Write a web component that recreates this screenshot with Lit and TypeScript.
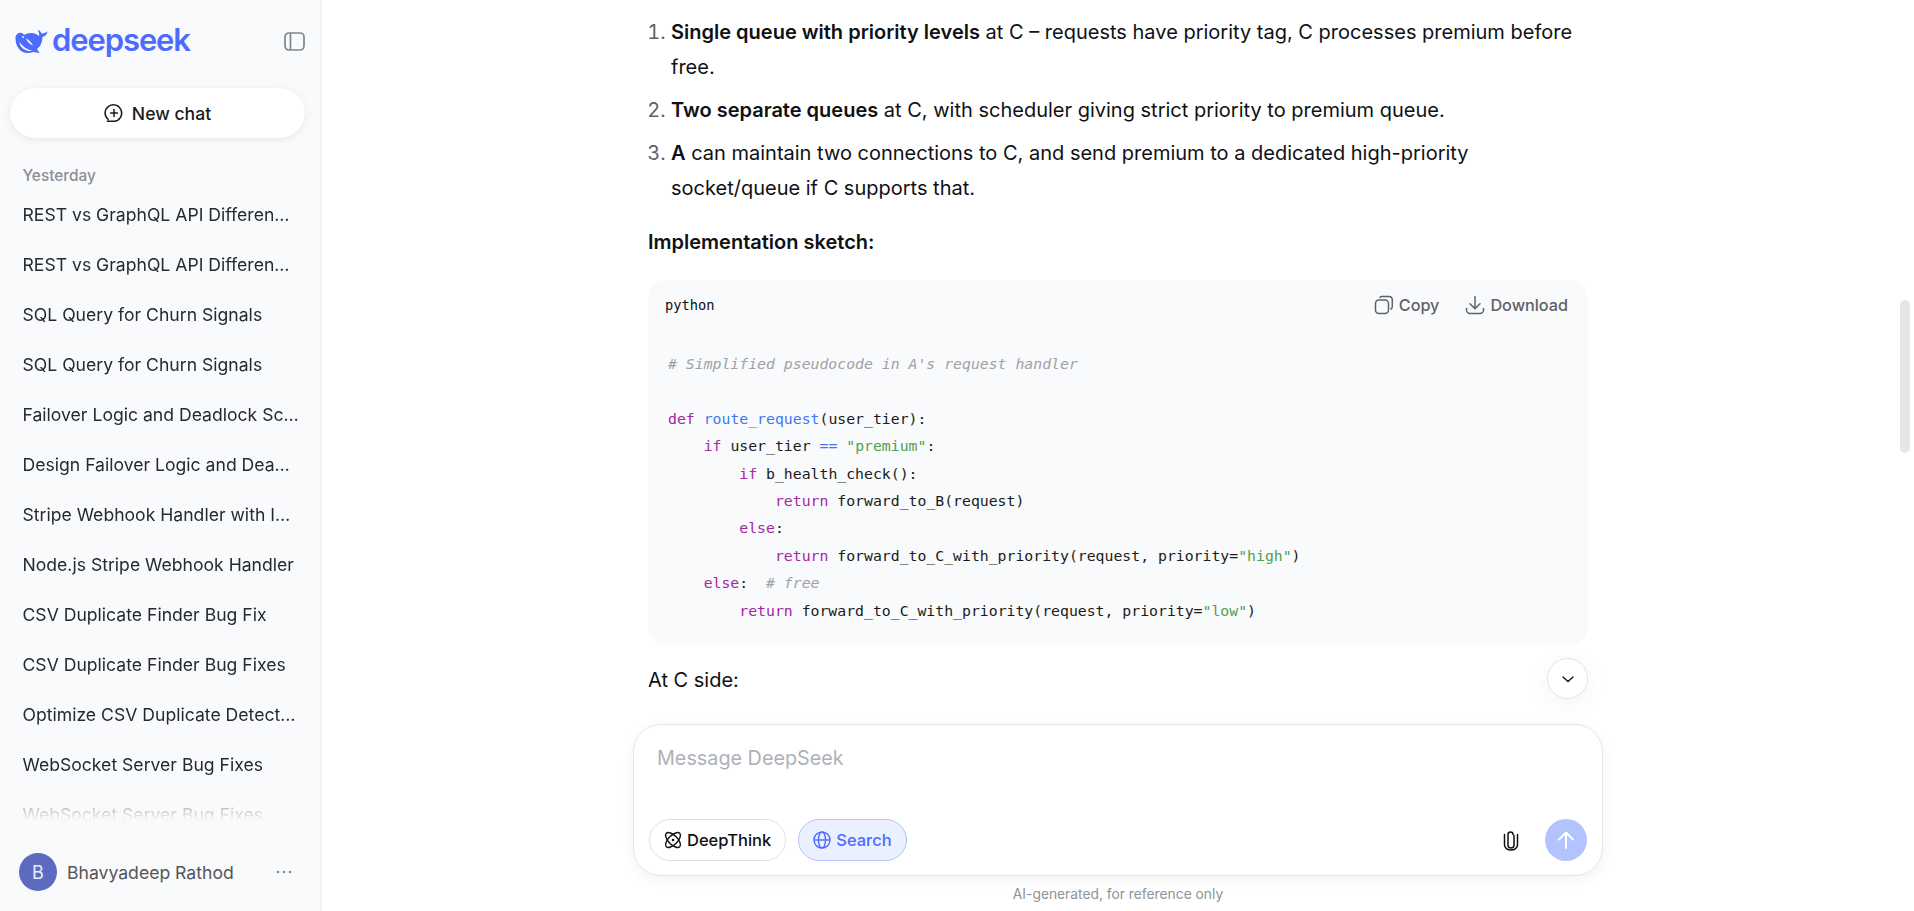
import { LitElement, html, css, svg } from "lit";
import { customElement } from "lit/decorators.js";

const chats = [
  "REST vs GraphQL API Differen…",
  "REST vs GraphQL API Differen…",
  "SQL Query for Churn Signals",
  "SQL Query for Churn Signals",
  "Failover Logic and Deadlock Sc…",
  "Design Failover Logic and Dea…",
  "Stripe Webhook Handler with I…",
  "Node.js Stripe Webhook Handler",
  "CSV Duplicate Finder Bug Fix",
  "CSV Duplicate Finder Bug Fixes",
  "Optimize CSV Duplicate Detect…",
  "WebSocket Server Bug Fixes",
  "WebSocket Server Bug Fixes",
];

const whale = svg`<path d="M.5 9C.5 5 4 3 7 4c1 .5 1.500 1 2 2 3-2 8-3 12-1 1 .5 2 1.500 3 2 .5-2 0-4-1.500-6 2 0 3.500 2 4 3.500 1.500 0 3.500-.5 6-2-.5 3-2.500 5-5 5.500 0 5-2.500 10-5.500 12l2.500 4-6.500-1c-5 2-11 1-14-3C1.500 17 .5 13 .5 9z" fill="currentColor"/><path d="M4.500 13c3 4 7 7.500 13 9-5.500.6-10.500-2-12.500-6zM11 9.500c3 1.500 5.500 4 7 7-3.500-1.500-6-4-7-7z" fill="#f9fafb"/><circle cx="8" cy="8" r="0.900" fill="#f9fafb"/>`;

@customElement("app-root")
export class AppRoot extends LitElement {
  static styles = css`
    :host { display: flex; height: 100vh; overflow: hidden; font-family: Inter, "Liberation Sans", sans-serif; color: #0f1115; background: #fff; position: relative; }
    * { box-sizing: border-box; }
    svg { display: block; flex: none; }

    .side { width: 322px; flex: none; background: #f9fafb; border-right: 2px solid #f1f2f4; display: flex; flex-direction: column; padding: 0 15px 0 10px; }
    .brand { display: flex; align-items: center; justify-content: space-between; height: 40px; margin-top: 21px; padding-left: 5px; }
    .logo { display: flex; align-items: center; gap: 4px; color: #4d6bfe; }
    .logo span { font-family: Inter, sans-serif; font-weight: 600; font-size: 31px; letter-spacing: -1.100px; line-height: 1; position: relative; top: -2px; }
    .toggle { color: #81858c; }
    .new { margin-top: 27px; height: 50px; border-radius: 25px; background: #fff; box-shadow: 0 2px 8px rgba(0,0,0,.07), 0 0 1px rgba(0,0,0,.08); display: flex; align-items: center; justify-content: center; gap: 8px; font-size: 17.600px; font-weight: 500; color: #1a1c20; }
    .group { margin-top: 27px; padding-left: 12.500px; height: 22px; line-height: 22px; font-size: 15.400px; font-weight: 500; color: #8b8e96; }
    .list { flex: 1; min-height: 0; overflow: hidden; margin-top: 3px; -webkit-mask-image: linear-gradient(to bottom, #000 calc(100% - 60px), transparent calc(100% - 12px)); mask-image: linear-gradient(to bottom, #000 calc(100% - 60px), transparent calc(100% - 12px)); }
    .item { height: 50px; line-height: 50px; padding: 0 0 0 12.500px; font-size: 17.600px; color: #262a30; white-space: nowrap; }
    .user { height: 78px; display: flex; align-items: center; padding: 0 0 0 9px; flex: none; }
    .avatar { width: 38px; height: 38px; border-radius: 50%; background: #5c6bc0; color: #e8eaf6; display: flex; align-items: center; justify-content: center; font-size: 18px; margin-right: 10px; }
    .name { flex: 1; font-size: 17.600px; color: #555; }
    .dots { margin-right: 13px; color: #81858c; }

    .main { flex: 1; min-width: 0; display: flex; flex-direction: column; align-items: center; position: relative; }
    .chat { flex: 1; min-height: 0; width: 940px; overflow: hidden; font-size: 20px; line-height: 35px; }
    ol { margin: 0; padding: 15px 0 0 23px; }
    li { margin-bottom: 8px; }
    li::marker { color: #5e6168; }
    b { font-weight: 600; }
    p { margin: 0; }
    .h { margin-top: 19px; font-weight: 600; }
    .code { margin-top: 20px; background: #f9fafb; border-radius: 18px; padding: 0 20px 14px 17px; height: 365px; }
    .code-head { height: 50px; display: flex; align-items: center; justify-content: space-between; }
    .lang { font-family: "DejaVu Sans Mono", monospace; font-size: 13.700px; color: #0f1115; }
    .acts { display: flex; gap: 26px; font-size: 16.200px; font-weight: 500; color: #5e6168; line-height: 1; }
    .act { display: flex; align-items: center; gap: 5px; }
    pre { margin: 20px 0 0 3px; font-family: "DejaVu Sans Mono", monospace; font-size: 14.800px; line-height: 27.400px; color: #1a1c20; }
    .k { color: #a626a4; } .f { color: #4078f2; } .s { color: #50a14f; } .c { color: #a0a1a7; font-style: italic; } .o { color: #4078f2; }
    .after { margin-top: 18px; }

    .down { position: absolute; left: 1225px; top: 658px; width: 41px; height: 41px; border-radius: 50%; background: #fff; border: 1px solid #e4e5e8; box-shadow: 0 4px 24px rgba(0,0,0,.05); display: flex; align-items: center; justify-content: center; color: #1a1c20; }

    .composer { width: 970px; height: 152px; flex: none; border: 1px solid #e4e5e8; border-radius: 28px; background: #fff; box-shadow: 0 4px 14px rgba(0,0,0,.05); padding: 15px 15px 14px 15px; display: flex; flex-direction: column; justify-content: space-between; }
    .ph { font-size: 19.800px; line-height: 36px; color: #adb1b9; padding-left: 8px; }
    .tools { display: flex; align-items: center; gap: 12px; }
    .pill { height: 42px; border-radius: 21px; border: 1px solid #dfe0e4; display: flex; align-items: center; gap: 5px; padding: 0 14px; font-size: 16.500px; font-weight: 500; color: #0f1115; }
    .pill.on { background: #eaf0fe; border-color: #b3c4fb; color: #4d6bfe; }
    .right { margin-left: auto; display: flex; align-items: center; gap: 26px; color: #0f1115; }
    .send { width: 42px; height: 42px; border-radius: 50%; background: #b2c3ff; display: flex; align-items: center; justify-content: center; color: #fff; }
    .note { height: 35px; flex: none; display: flex; align-items: center; font-size: 13.800px; color: #909399; }

    .thumb { position: absolute; right: 4px; top: 300px; width: 10px; height: 153px; border-radius: 5px; background: #e6e6e6; }
  `;

  render() {
    return html`
      <aside class="side">
        <div class="brand">
          <div class="logo">
            <svg width="33" height="25" viewBox="0 0 33 25">${whale}</svg>
            <span>deepseek</span>
          </div>
          <svg class="toggle" width="21" height="19" viewBox="0 0 21 19" fill="none" stroke="currentColor" stroke-width="1.700"><rect x="1" y="1" width="19" height="17" rx="4"/><path d="M6.500 1v17"/></svg>
        </div>
        <div class="new">
          <svg width="20" height="20" viewBox="0 0 20 20" fill="none" stroke="currentColor" stroke-width="1.500" stroke-linecap="round"><path d="M4.200 16.500A8.300 8.300 0 1 1 10 18.300H3.300"/><path d="M10 6.600v6.800M6.600 10h6.800"/></svg>
          New chat
        </div>
        <div class="group">Yesterday</div>
        <div class="list">${chats.map((c) => html`<div class="item">${c}</div>`)}</div>
        <div class="user">
          <div class="avatar">B</div>
          <div class="name">Bhavyadeep Rathod</div>
          <svg class="dots" width="16" height="4" viewBox="0 0 16 4" fill="currentColor"><circle cx="2" cy="2" r="1.200"/><circle cx="8" cy="2" r="1.200"/><circle cx="14" cy="2" r="1.200"/></svg>
        </div>
      </aside>
      <main class="main">
        <div class="chat">
          <ol>
            <li><b>Single queue with priority levels</b> at C – requests have priority tag, C processes premium before free.</li>
            <li><b>Two separate queues</b> at C, with scheduler giving strict priority to premium queue.</li>
            <li><b>A</b> can maintain two connections to C, and send premium to a dedicated high-priority socket/queue if C supports that.</li>
          </ol>
          <p class="h">Implementation sketch:</p>
          <div class="code">
            <div class="code-head">
              <span class="lang">python</span>
              <div class="acts">
                <span class="act"><svg width="20" height="20" viewBox="0 0 20 20" fill="none" stroke="currentColor" stroke-width="1.500"><rect x="1.500" y="5" width="13" height="13.500" rx="3.500"/><path d="M5.500 2.800c.5-.8 1.300-1.300 2.300-1.300h7c2 0 3.500 1.500 3.500 3.500v6.500c0 1.200-.7 2.200-1.800 2.700"/></svg>Copy</span>
                <span class="act"><svg width="20" height="20" viewBox="0 0 20 20" fill="none" stroke="currentColor" stroke-width="1.500" stroke-linecap="round" stroke-linejoin="round"><path d="M10 1.500v12M5 8.800l5 5 5-5"/><path d="M1.500 13.500v1.500c0 1.900 1.600 3.500 3.500 3.500h10c1.900 0 3.500-1.600 3.500-3.500v-1.500"/></svg>Download</span>
              </div>
            </div>
            <pre><span class="c"># Simplified pseudocode in A's request handler</span>

<span class="k">def</span> <span class="f">route_request</span>(user_tier):
    <span class="k">if</span> user_tier <span class="o">==</span> <span class="s">"premium"</span>:
        <span class="k">if</span> b_health_check():
            <span class="k">return</span> forward_to_B(request)
        <span class="k">else</span>:
            <span class="k">return</span> forward_to_C_with_priority(request, priority=<span class="s">"high"</span>)
    <span class="k">else</span>:  <span class="c"># free</span>
        <span class="k">return</span> forward_to_C_with_priority(request, priority=<span class="s">"low"</span>)</pre>
          </div>
          <p class="after">At C side:</p>
        </div>
        <div class="down"><svg width="16" height="16" viewBox="0 0 16 16" fill="none" stroke="currentColor" stroke-width="1.500" stroke-linecap="round" stroke-linejoin="round"><path d="M3 6l5 4.500L13 6"/></svg></div>
        <div class="composer">
          <div class="ph">Message DeepSeek</div>
          <div class="tools">
            <div class="pill"><svg width="18" height="18" viewBox="0 0 18 18" fill="none" stroke="currentColor" stroke-width="1.400"><ellipse cx="9" cy="9" rx="9.500" ry="4.500" transform="rotate(45 9 9)"/><ellipse cx="9" cy="9" rx="9.500" ry="4.500" transform="rotate(-45 9 9)"/><circle cx="9" cy="9" r="1.300" fill="currentColor" stroke="none"/></svg>DeepThink</div>
            <div class="pill on"><svg width="18" height="18" viewBox="0 0 18 18" fill="none" stroke="currentColor" stroke-width="1.400"><circle cx="9" cy="9" r="8"/><ellipse cx="9" cy="9" rx="3.500" ry="8"/><path d="M1 9h16"/></svg>Search</div>
            <div class="right">
              <svg width="16" height="21" viewBox="0 0 16 21" fill="none" stroke="currentColor" stroke-width="1.500" stroke-linecap="round"><path d="M11 5.500v9.500a3 3 0 0 1-6 0V4.500a2.500 2.500 0 0 1 5 0"/><path d="M14.500 4.500v10.500a6.500 5 0 0 1-13 0V4.500"/></svg>
              <div class="send"><svg width="20" height="20" viewBox="0 0 20 20" fill="none" stroke="currentColor" stroke-width="2" stroke-linecap="round" stroke-linejoin="round"><path d="M10 18V3M3 9.500L10 2.500l7 7"/></svg></div>
            </div>
          </div>
        </div>
        <div class="note">AI-generated, for reference only</div>
      </main>
      <div class="thumb"></div>
    `;
  }
}
